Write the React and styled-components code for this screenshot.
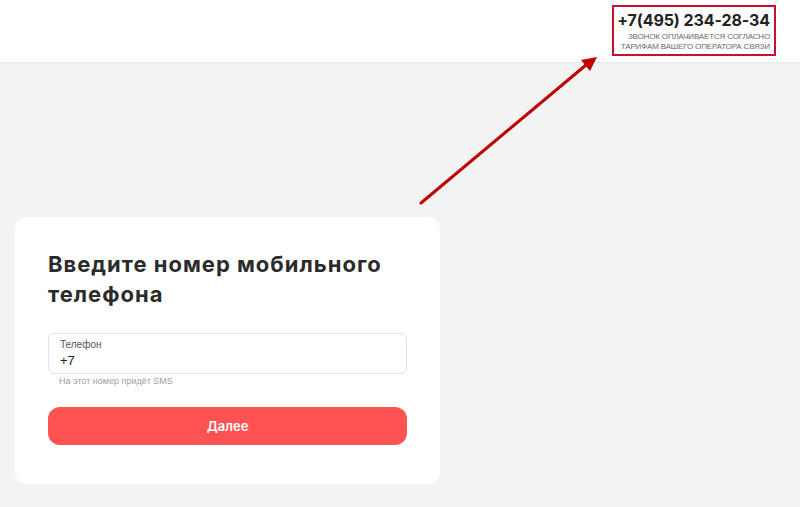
import React, { useState } from "react";
import styled, { createGlobalStyle } from "styled-components";

const GlobalStyle = createGlobalStyle`
  html, body {
    margin: 0;
    padding: 0;
    background: #f3f3f3;
    font-family: Inter, "Noto Sans", sans-serif;
  }
`;

const Page = styled.div`
  position: relative;
  width: 800px;
  height: 507px;
  overflow: hidden;
  background: #f3f3f3;
`;

const Header = styled.header`
  height: 63px;
  background: #fff;
  border-bottom: 1px solid #e6e6e6;
  display: flex;
  justify-content: flex-end;
  align-items: flex-start;
  padding: 5px 24px 0 0;
  box-sizing: border-box;
`;

const PhoneBox = styled.div`
  height: 51px;
  box-sizing: border-box;
  border: 2px solid #c8102e;
  padding: 3px 4px 0 3px;
  display: flex;
  flex-direction: column;
  align-items: flex-end;
  white-space: nowrap;
`;

const PhoneNumber = styled.div`
  font-family: Inter, sans-serif;
  font-weight: 700;
  font-size: 16px;
  line-height: 20px;
  color: #222;
  letter-spacing: -0.1px;
`;

const PhoneNote = styled.div`
  margin-top: 2px;
  font-family: "Liberation Sans", Arial, sans-serif;
  font-size: 8px;
  line-height: 10px;
  color: #6a6a6a;
  text-transform: uppercase;
  text-align: right;
  letter-spacing: -0.15px;
`;

const Main = styled.main`
  padding: 154px 0 0 15px;
`;

const Card = styled.section`
  width: 425px;
  height: 267px;
  background: #fff;
  border-radius: 12px;
  padding: 32px 33px 0 33px;
  box-sizing: border-box;
`;

const Title = styled.h1`
  margin: 0 0 24px;
  font-family: Inter, sans-serif;
  font-weight: 700;
  font-size: 22px;
  line-height: 30px;
  color: #2b2b2b;
  letter-spacing: 1px;
`;

const Field = styled.label`
  display: flex;
  flex-direction: column;
  height: 41px;
  border: 1px solid #e2e2e2;
  border-radius: 6px;
  padding: 5px 11px 0;
  box-sizing: border-box;
`;

const FieldLabel = styled.span`
  font-family: "Liberation Sans", Arial, sans-serif;
  font-size: 10px;
  line-height: 12px;
  color: #555;
`;

const Input = styled.input`
  border: 0;
  outline: none;
  padding: 0;
  margin-top: 2px;
  font-family: "Liberation Sans", Arial, sans-serif;
  font-size: 13px;
  line-height: 16px;
  color: #222;
  background: transparent;
`;

const Hint = styled.div`
  margin: 1px 0 0 11px;
  font-family: "Liberation Sans", Arial, sans-serif;
  font-size: 9px;
  line-height: 12px;
  color: #a0a0a0;
`;

const SubmitButton = styled.button`
  margin-top: 20px;
  width: 100%;
  height: 38px;
  border: 0;
  border-radius: 12px;
  background: #ff5252;
  color: #fff;
  font-family: Inter, sans-serif;
  font-weight: 600;
  font-size: 13px;
  cursor: pointer;
`;

const Arrow = styled.svg`
  position: absolute;
  left: 0;
  top: 0;
  pointer-events: none;
`;

const App = () => {
  const [phone, setPhone] = useState("+7");

  return (
    <Page>
      <GlobalStyle />
      <Header>
        <PhoneBox>
          <PhoneNumber>+7(495) 234-28-34</PhoneNumber>
          <PhoneNote>
            Звонок оплачивается согласно
            <br />
            тарифам вашего оператора связи
          </PhoneNote>
        </PhoneBox>
      </Header>
      <Main>
        <Card>
          <Title>
            Введите номер мобильного
            <br />
            телефона
          </Title>
          <Field>
            <FieldLabel>Телефон</FieldLabel>
            <Input value={phone} onChange={(e) => setPhone(e.target.value)} />
          </Field>
          <Hint>На этот номер придёт SMS</Hint>
          <SubmitButton type="button">Далее</SubmitButton>
        </Card>
      </Main>
      <Arrow width="800" height="507" viewBox="0 0 800 507">
        <path d="M421 203 L586 65" stroke="#c00000" strokeWidth="3" strokeLinecap="round" />
        <path d="M597 57 L581 60 L590 71 Z" fill="#c00000" />
      </Arrow>
    </Page>
  );
};

export default App;
